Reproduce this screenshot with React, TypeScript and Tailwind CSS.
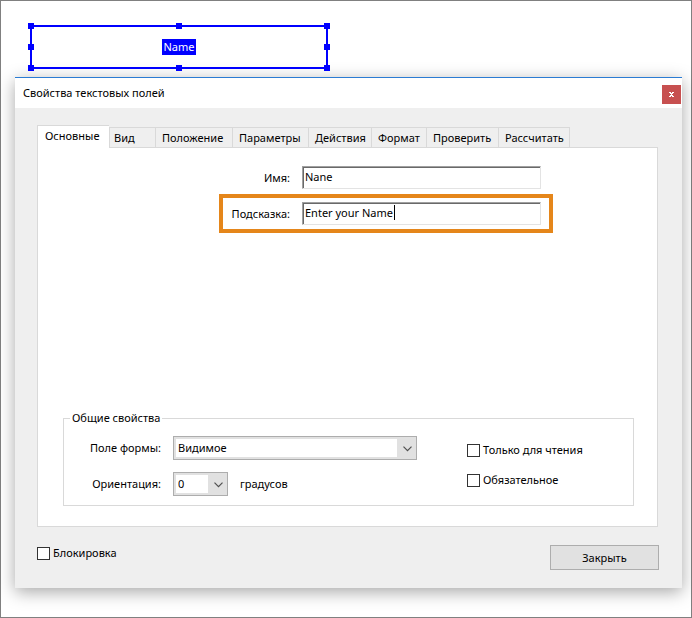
import { type ReactElement, type ReactNode } from 'react';
import clsx from 'clsx';

const TABS = [
  { label: 'Основные', width: 'w-[72px]' },
  { label: 'Вид', width: 'w-[46px]' },
  { label: 'Положение', width: 'w-[77px]' },
  { label: 'Параметры', width: 'w-[76px]' },
  { label: 'Действия', width: 'w-[63px]' },
  { label: 'Формат', width: 'w-[55px]' },
  { label: 'Проверить', width: 'w-[72px]' },
  { label: 'Рассчитать', width: 'w-[72px]' },
];

const HANDLES = [
  'left-0 top-0',
  'left-1/2 top-0',
  'left-full top-0',
  'left-0 top-1/2',
  'left-full top-1/2',
  'left-0 top-full',
  'left-1/2 top-full',
  'left-full top-full',
];

function SelectedField(): ReactElement {
  return (
    <div className="relative ml-[29px] flex h-11 w-[298px] items-center justify-center border-2 border-[#0000ff]">
      <span className="bg-[#0000ff] px-px leading-4 text-white">Name</span>
      {/* resize handles sit centred on the outline */}
      <div className="absolute -inset-px">
        {HANDLES.map((place) => (
          <span key={place} className={clsx('absolute size-1.5 -translate-1/2 bg-[#0000ff]', place)} />
        ))}
      </div>
    </div>
  );
}

interface TextFieldProps {
  id: string;
  label: string;
  value: string;
  highlighted?: boolean;
}

function TextField({ id, label, value, highlighted = false }: TextFieldProps): ReactElement {
  return (
    <div
      className={clsx(
        'flex items-center gap-3 border-x-4 pr-2 pl-[7px]',
        highlighted ? 'border-y-4 border-[#e5861a] py-1' : 'border-transparent',
      )}
    >
      <label htmlFor={id} className="flex w-[60px] justify-end whitespace-nowrap">
        {label}
      </label>
      <div className="relative min-w-0 flex-1 border border-t-[#a0a0a0] border-r-[#e3e3e3] border-b-[#e3e3e3] border-l-[#a0a0a0]">
        <input
          id={id}
          type="text"
          defaultValue={value}
          className="block h-[21px] w-full border-t border-l border-[#696969] bg-white px-px pb-1 outline-none"
        />
        {highlighted && <span className="absolute top-0.5 left-[91px] h-[15px] w-px bg-black" />}
      </div>
    </div>
  );
}

interface DropdownProps {
  id: string;
  value: string;
  className: string;
}

function Dropdown({ id, value, className }: DropdownProps): ReactElement {
  return (
    <div className={clsx('relative border border-[#adadad]', className)}>
      <select
        id={id}
        defaultValue={value}
        className="block h-[22px] w-full appearance-none border-2 border-r-[19px] border-[#e1e1e1] bg-white pl-0.5 leading-4 outline-none"
      >
        <option>{value}</option>
      </select>
      <svg
        viewBox="0 0 9 6"
        className="pointer-events-none absolute top-[9px] right-1 h-1.5 w-[9px] fill-none stroke-[#505050]"
      >
        <path d="M0.5 0.7 4.5 4.7 8.5 0.7" strokeWidth="1.2" />
      </svg>
    </div>
  );
}

function Checkbox({ children }: { children: ReactNode }): ReactElement {
  return (
    <label className="flex h-4 items-center gap-[3px] whitespace-nowrap">
      <input type="checkbox" className="size-[13px] shrink-0 appearance-none border border-[#333333] bg-white" />
      {children}
    </label>
  );
}

function TabBar(): ReactElement {
  return (
    <div role="tablist" className="-mb-px flex items-end">
      {TABS.map(({ label, width }, index) => (
        <button
          key={label}
          type="button"
          role="tab"
          aria-selected={index === 0}
          className={clsx(
            'border-[#d9d9d9] text-left whitespace-nowrap',
            width,
            index === 0
              ? 'h-[23px] border-t border-l bg-white pb-0.5 pl-[7px]'
              : 'h-[21px] border-y border-l bg-[#efefef]',
            index === 1 && 'pl-1',
            index > 1 && 'pl-1.5',
            index === TABS.length - 1 && 'border-r',
          )}
        >
          {label}
        </button>
      ))}
    </div>
  );
}

export default function App(): ReactElement {
  return (
    <main className="min-h-screen border border-[#808080] bg-white pt-6 pb-7 font-['Noto_Sans','Open_Sans',sans-serif] text-[11px] leading-4 text-black">
      <SelectedField />

      <section className="mt-2 mr-[9px] ml-[14px] border-t border-[#2b7cd3] bg-[#efefef] shadow-[0_4px_16px_rgba(0,0,0,0.35)]">
        <header className="flex h-[30px] items-center justify-between bg-white pr-px pl-2">
          <h1>Свойства текстовых полей</h1>
          <button
            type="button"
            aria-label="Закрыть окно"
            className="mt-[3px] flex size-[19px] items-center justify-center bg-[#c75050]"
          >
            <svg viewBox="0 0 5 5" className="size-[5px] fill-white" shapeRendering="crispEdges">
              <path d="M0 0h2v1h1V0h2v1H4v1H3v1h1v1h1v1H3V4H2v1H0V4h1V3h1V2H1V1H0z" />
            </svg>
          </button>
        </header>

        <div className="px-[22px] pt-[17px]">
          <TabBar />
          <div className="mr-0.5 flex min-h-[380px] flex-col border border-[#d9d9d9] bg-white pt-[18px] pb-5">
            <div className="mr-[104px] ml-[181px] flex flex-col gap-[5px]">
              <TextField id="name" label="Имя:" value="Nane" />
              <TextField id="hint" label="Подсказка:" value="Enter your Name" highlighted />
            </div>

            <fieldset className="mt-auto mr-[23px] ml-[25px] flex justify-between border border-[#d9d9d9] pr-[47px] pb-[9px]">
              <legend className="ml-1.5 px-0.5">Общие свойства</legend>
              <div className="grid grid-cols-[97px_1fr] items-center gap-x-3 gap-y-3 pt-2.5">
                <label htmlFor="visibility" className="text-right">
                  Поле формы:
                </label>
                <Dropdown id="visibility" value="Видимое" className="w-[244px]" />
                <label htmlFor="rotation" className="text-right">
                  Ориентация:
                </label>
                <div className="flex items-center gap-3">
                  <Dropdown id="rotation" value="0" className="w-[55px]" />
                  градусов
                </div>
              </div>
              <div className="flex w-[119px] flex-col gap-3.5 pt-4">
                <Checkbox>Только для чтения</Checkbox>
                <Checkbox>Обязательное</Checkbox>
              </div>
            </fieldset>
          </div>
        </div>

        <footer className="flex items-start justify-between pt-[18px] pr-[23px] pb-[18px] pl-[22px]">
          <Checkbox>Блокировка</Checkbox>
          <button type="button" className="h-[25px] w-[109px] border border-[#adadad] bg-[#e1e1e1]">
            Закрыть
          </button>
        </footer>
      </section>
    </main>
  );
}
